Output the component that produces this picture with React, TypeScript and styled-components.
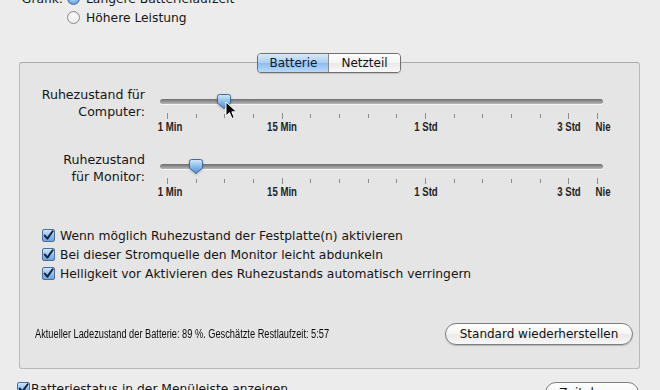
import * as React from 'react';
import styled, { createGlobalStyle } from 'styled-components';

const GlobalStyle = createGlobalStyle`
	html, body {
		margin: 0;
		padding: 0;
		background: #ececec;
	}
	body {
		font-family: "DejaVu Sans", "Lucida Grande", sans-serif;
		font-size: 12px;
		color: #151515;
	}
`;

const NARROW = `"Liberation Sans", Arial, sans-serif`;

const TICK_COUNT = 16;
const TICK_FIRST = 7;
const TICK_SPAN = 430;
const SCALE_LABELS: { [index: number]: { text: string; shift: number } } = {
	0: { text: '1 Min', shift: 3 },
	4: { text: '15 Min', shift: 0 },
	9: { text: '1 Std', shift: 1 },
	14: { text: '3 Std', shift: 1 },
	15: { text: 'Nie', shift: 6 },
};

const tickLeft = (i: number) => TICK_FIRST + (i * TICK_SPAN) / (TICK_COUNT - 1);

export default function App() {
	return (
		<Window>
			<GlobalStyle />
			<GraphicsGroup>
				<GroupLabel>Grafik:</GroupLabel>
				<RadioLine>
					<Radio checked />
					Längere Batterielaufzeit
				</RadioLine>
				<span />
				<RadioLine>
					<Radio />
					Höhere Leistung
				</RadioLine>
			</GraphicsGroup>

			<Panel>
				<TabsRow>
					<Segmented>
						<Segment selected>Batterie</Segment>
						<Segment>Netzteil</Segment>
					</Segmented>
				</TabsRow>

				<Sliders>
					<SleepSlider label={<>Ruhezustand für<br />Computer:</>} value={2} pointer />
					<SleepSlider label={<>Ruhezustand<br />für Monitor:</>} value={1} />
				</Sliders>

				<CheckList>
					<CheckLine><CheckBox />Wenn möglich Ruhezustand der Festplatte(n) aktivieren</CheckLine>
					<CheckLine><CheckBox />Bei dieser Stromquelle den Monitor leicht abdunkeln</CheckLine>
					<CheckLine><CheckBox />Helligkeit vor Aktivieren des Ruhezustands automatisch verringern</CheckLine>
				</CheckList>

				<StatusRow>
					<StatusText>Aktueller Ladezustand der Batterie: 89 %. Geschätzte Restlaufzeit: 5:57</StatusText>
					<PillButton width={188}>Standard wiederherstellen</PillButton>
				</StatusRow>
			</Panel>

			<BottomRow>
				<BottomCheck><CheckBox />Batteriestatus in der Menüleiste anzeigen</BottomCheck>
				<PillButton width={94}>Zeitplan …</PillButton>
			</BottomRow>
		</Window>
	);
}

const SleepSlider: React.FC<{ label: React.ReactNode; value: number; pointer?: boolean }> = ({ label, value, pointer }) => {
	const ticks = Array.from({ length: TICK_COUNT }, (_, i) => i);
	return (
		<SliderRow>
			<SliderLabel>{label}</SliderLabel>
			<SliderBody>
				<TrackArea>
					<Track />
					<Thumb style={{ left: tickLeft(value) - 8 }}>
						<svg width="16" height="17" viewBox="0 0 16 17">
							<defs>
								<linearGradient id={`thumb${value}`} x1="0" y1="0" x2="0" y2="1">
									<stop offset="0" stopColor="#d6e9fb" />
									<stop offset="0.45" stopColor="#8fc0ee" />
									<stop offset="1" stopColor="#4f8fd3" />
								</linearGradient>
							</defs>
							<path d="M1.5 3.5 Q1.5 1.5 3.5 1.5 H12.5 Q14.5 1.5 14.5 3.5 V10 L8 15.5 L1.5 10 Z" fill={`url(#thumb${value})`} stroke="#46699a" strokeWidth="1" />
						</svg>
					</Thumb>
					{pointer && (
						<Pointer style={{ left: tickLeft(value) + 1 }}>
							<svg width="14" height="20" viewBox="0 0 14 20">
								<path d="M1 1 L1 15 L4.5 11.6 L7 17.5 L9.2 16.5 L6.8 10.8 L11.5 10.8 Z" fill="#000" stroke="#fff" strokeWidth="1" strokeLinejoin="round" />
							</svg>
						</Pointer>
					)}
				</TrackArea>
				<Scale>
					{ticks.map((i) => (
						<React.Fragment key={i}>
							<Tick major={!!SCALE_LABELS[i]} style={{ left: tickLeft(i) }} />
							{SCALE_LABELS[i] && (
								<TickLabel style={{ left: tickLeft(i) + SCALE_LABELS[i].shift }}>{SCALE_LABELS[i].text}</TickLabel>
							)}
						</React.Fragment>
					))}
				</Scale>
			</SliderBody>
		</SliderRow>
	);
};

const Window = styled.div`
	width: 660px;
	height: 390px;
	overflow: hidden;
	background: #ececec;
`;

const GraphicsGroup = styled.div`
	display: grid;
	grid-template-columns: 63px auto;
	grid-auto-rows: 19px;
	column-gap: 4px;
	margin-top: -11px;
`;

const GroupLabel = styled.div`
	display: flex;
	align-items: center;
	justify-content: flex-end;
	font-size: 12.3px;
`;

const RadioLine = styled.label`
	display: flex;
	align-items: center;
	gap: 6px;
	font-size: 12.3px;
`;

const Radio = styled.span<{ checked?: boolean }>`
	width: 13px;
	height: 13px;
	box-sizing: border-box;
	border-radius: 50%;
	border: 1px solid ${(p) => (p.checked ? '#4a6f9e' : '#8a8a8a')};
	background: ${(p) =>
		p.checked
			? 'radial-gradient(circle at 50% 35%, #d7ebfc 0%, #7cb3ea 60%, #3d7fcb 100%)'
			: 'linear-gradient(#ffffff, #eaeaea)'};
	box-shadow: inset 0 1px 1px rgba(0, 0, 0, 0.08);
`;

const Panel = styled.div`
	box-sizing: border-box;
	width: 621px;
	margin: 35px 0 0 19px;
	border: 1px solid #b9b9b9;
	border-top-color: #a9a9a9;
	border-radius: 3px;
	background: #e5e5e5;
	padding-bottom: 23px;
`;

const TabsRow = styled.div`
	display: flex;
	justify-content: center;
	margin-top: -10px;
	padding-right: 1px;
`;

const Segmented = styled.div`
	display: flex;
	height: 20px;
	box-sizing: border-box;
	border: 1px solid #6f6f6f;
	border-radius: 4px;
	overflow: hidden;
	box-shadow: 0 1px 1px rgba(0, 0, 0, 0.15);
`;

const Segment = styled.div<{ selected?: boolean }>`
	display: flex;
	align-items: center;
	justify-content: center;
	padding: 0 ${(p) => (p.selected ? '11px' : '12px')};
	font-size: 12px;
	color: ${(p) => (p.selected ? '#0c1a33' : '#111')};
	background: ${(p) =>
		p.selected
			? 'linear-gradient(#d9eafa 0%, #a9cdf1 50%, #8cbcec 51%, #b9dafb 100%)'
			: 'linear-gradient(#ffffff 0%, #f4f4f4 50%, #e9e9e9 51%, #f8f8f8 100%)'};
	& + & {
		border-left: 1px solid #8a8a8a;
	}
`;

const Sliders = styled.div`
	display: flex;
	flex-direction: column;
	gap: 24px;
	margin-top: 20px;
`;

const SliderRow = styled.div`
	display: grid;
	grid-template-columns: 125px 443px;
	column-gap: 15px;
	align-items: start;
`;

const SliderLabel = styled.div`
	height: 17px;
	display: flex;
	align-items: center;
	justify-content: flex-end;
	text-align: right;
	font-size: 12.6px;
	line-height: 17px;
	white-space: nowrap;
	margin-top: 1px;
`;

const SliderBody = styled.div`
	display: flex;
	flex-direction: column;
`;

const TrackArea = styled.div`
	position: relative;
	height: 17px;
`;

const Track = styled.div`
	margin-top: 6px;
	height: 5px;
	border-radius: 3px;
	background: linear-gradient(#6e6e6e, #9a9a9a 60%, #b8b8b8);
	box-shadow: 0 1px 0 rgba(255, 255, 255, 0.7);
`;

const Thumb = styled.div`
	position: absolute;
	top: 0;
	width: 16px;
	height: 17px;
	filter: drop-shadow(0 1px 1px rgba(0, 0, 0, 0.25));
	svg {
		display: block;
	}
`;

const Pointer = styled.div`
	position: absolute;
	top: 8px;
	z-index: 2;
	svg {
		display: block;
	}
`;

const Scale = styled.div`
	position: relative;
	height: 24px;
`;

const Tick = styled.div<{ major?: boolean }>`
	position: absolute;
	top: ${(p) => (p.major ? '3px' : '4px')};
	width: 1px;
	height: ${(p) => (p.major ? '6px' : '4px')};
	background: #8c8c8c;
`;

const TickLabel = styled.div`
	position: absolute;
	top: 11px;
	transform: translateX(-50%) scaleX(0.8);
	font-family: ${NARROW};
	font-size: 12px;
	font-weight: bold;
	line-height: 13px;
	color: #222;
	white-space: nowrap;
`;

const CheckList = styled.div`
	display: flex;
	flex-direction: column;
	margin-top: 27px;
	padding-left: 22px;
`;

const CheckLine = styled.label`
	display: flex;
	align-items: center;
	gap: 5px;
	height: 19px;
	font-size: 12.3px;
	white-space: nowrap;
`;

const CheckBox: React.FC = () => (
	<CheckFrame>
		<svg width="11" height="11" viewBox="0 0 11 11">
			<path d="M1.8 5.6 L4.4 8.6 L9.6 1.2" fill="none" stroke="#14213f" strokeWidth="2" strokeLinecap="round" strokeLinejoin="round" />
		</svg>
	</CheckFrame>
);

const CheckFrame = styled.span`
	flex: none;
	width: 13px;
	height: 13px;
	box-sizing: border-box;
	border: 1px solid #4b6d98;
	border-radius: 2px;
	background: linear-gradient(#cfe5fb 0%, #8ebeee 55%, #6aa4e0 100%);
	display: flex;
	align-items: center;
	justify-content: center;
	svg {
		display: block;
	}
`;

const StatusRow = styled.div`
	display: flex;
	align-items: center;
	justify-content: space-between;
	margin-top: 40px;
	padding: 0 6px 0 15px;
`;

const StatusText = styled.div`
	font-family: ${NARROW};
	font-size: 12.5px;
	color: #0a0a0a;
	white-space: nowrap;
	transform: scaleX(0.74);
	transform-origin: left center;
`;

const PillButton = styled.button<{ width: number }>`
	flex: none;
	width: ${(p) => p.width}px;
	height: 22px;
	box-sizing: border-box;
	border: 1px solid #7d7d7d;
	border-radius: 11px;
	background: linear-gradient(#ffffff 0%, #f5f5f5 50%, #e9e9e9 51%, #f7f7f7 100%);
	box-shadow: 0 1px 1px rgba(0, 0, 0, 0.2);
	font-family: "DejaVu Sans", "Lucida Grande", sans-serif;
	font-size: 12px;
	color: #111;
	padding: 0;
	white-space: nowrap;
`;

const BottomRow = styled.div`
	display: flex;
	align-items: flex-start;
	justify-content: space-between;
	margin-top: 13px;
	padding: 0 21px 0 17px;
`;

const BottomCheck = styled(CheckLine)`
	height: 13px;
	gap: 0;
	span {
		margin-right: 1px;
	}
`;
